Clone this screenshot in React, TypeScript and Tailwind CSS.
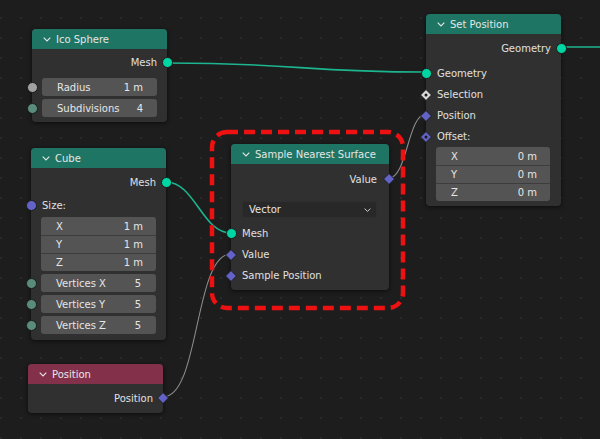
import React from "react";

type SocketKind = "geo" | "float" | "int" | "vec" | "vecField" | "vecFieldDot" | "boolField";

const Socket = ({ kind, side }: { kind: SocketKind; side: "left" | "right" }) => {
  const pos = side === "left" ? "left-[-6px]" : "right-[-6px]";
  const base = `absolute top-1/2 -translate-y-1/2 ${pos} w-[12px] h-[12px] flex items-center justify-center`;
  if (kind === "geo" || kind === "float" || kind === "int" || kind === "vec") {
    const color =
      kind === "geo" ? "bg-[#00d6a3]" : kind === "float" ? "bg-[#a1a1a1]" : kind === "int" ? "bg-[#598c7c]" : "bg-[#6363c7]";
    return (
      <span className={base}>
        <span className={`w-[11px] h-[11px] rounded-full border border-[#1a1a1a] ${color}`} />
      </span>
    );
  }
  const fill = kind === "boolField" ? "#d9d9d9" : "#6363c7";
  return (
    <span className={base}>
      <svg width="12" height="12" viewBox="0 0 12 12">
        <path d="M6 0.5 L11.5 6 L6 11.5 L0.5 6 Z" fill={fill} stroke="#1a1a1a" strokeWidth="1" />
        {(kind === "boolField" || kind === "vecFieldDot") && <circle cx="6" cy="6" r="1.5" fill="#1a1a1a" />}
      </svg>
    </span>
  );
};

const Chevron = () => (
  <svg width="8" height="5" viewBox="0 0 8 5" className="shrink-0">
    <path d="M0.7 0.7 L4 4 L7.3 0.7" fill="none" stroke="#e6e6e6" strokeWidth="1.1" />
  </svg>
);

const Node = ({
  x,
  y,
  w,
  title,
  header = "bg-[#1f7563]",
  children,
}: {
  x: number;
  y: number;
  w: number;
  title: string;
  header?: string;
  children: React.ReactNode;
}) => (
  <div
    className="absolute rounded-[4px] bg-[#303030] shadow-[0_1px_4px_rgba(0,0,0,0.6)]"
    style={{ left: x, top: y, width: w }}
  >
    <div className={`h-[20px] rounded-t-[4px] ${header} flex items-center gap-[5px] pl-[11px] text-[10px] text-[#e6e6e6]`}>
      <Chevron />
      <span>{title}</span>
    </div>
    {children}
  </div>
);

const OutRow = ({ label, kind, h = 22 }: { label: string; kind: SocketKind; h?: number }) => (
  <div className="relative flex items-center justify-end pr-[10px] text-[10px] text-[#e0e0e0]" style={{ height: h }}>
    {label}
    <Socket kind={kind} side="right" />
  </div>
);

const InRow = ({ label, kind, h = 21 }: { label: string; kind: SocketKind; h?: number }) => (
  <div className="relative flex items-center pl-[11px] text-[10px] text-[#e0e0e0]" style={{ height: h }}>
    {label}
    <Socket kind={kind} side="left" />
  </div>
);

const Field = ({ label, value, kind, pr = "pr-[14px]" }: { label: string; value: string; kind?: SocketKind; pr?: string }) => (
  <div className="relative">
    {kind && <Socket kind={kind} side="left" />}
    <div className={`mx-[10px] h-[18px] rounded-[3px] bg-[#545454] flex items-center justify-between pl-[15px] ${pr} text-[10px] text-[#e6e6e6]`}>
      <span>{label}</span>
      <span>{value}</span>
    </div>
  </div>
);

const VecFields = ({ rows, mr = "mr-[10px]" }: { rows: [string, string][]; mr?: string }) => (
  <div className={`ml-[10px] ${mr} rounded-[3px] bg-[#545454] flex flex-col`}>
    {rows.map(([l, v], i) => (
      <div
        key={l}
        className={`h-[18px] flex items-center justify-between pl-[15px] pr-[13px] text-[10px] text-[#e6e6e6] ${
          i > 0 ? "border-t border-[#3d3d3d]" : ""
        }`}
      >
        <span>{l}</span>
        <span>{v}</span>
      </div>
    ))}
  </div>
);

export default function App() {
  return (
    <div
      className="relative w-[600px] h-[439px] overflow-hidden bg-[#1d1d1d] bg-[radial-gradient(circle,#2a2a2a_1px,transparent_1.2px)] bg-[size:20px_20px] bg-[position:11px_8px]"
      style={{ fontFamily: '"DejaVu Sans", sans-serif' }}
    >
      <svg className="absolute inset-0" width="600" height="439">
        <path d="M167 63 C300 63 300 72 426 72" fill="none" stroke="#1cb58f" strokeWidth="1.6" />
        <path d="M561 47 L600 47" fill="none" stroke="#1cb58f" strokeWidth="1.6" />
        <path d="M166 182 C195 182 202 233 231 233" fill="none" stroke="#1cb58f" strokeWidth="1.6" />
        <path d="M163 397 C200 397 194 254 231 254" fill="none" stroke="#8c8c8c" strokeWidth="1.1" />
        <path d="M389 178 C407 178 408 114 426 114" fill="none" stroke="#8c8c8c" strokeWidth="1.1" />
      </svg>

      <Node x={32} y={29} w={135} title="Ico Sphere">
        <div className="pt-[3px]">
          <OutRow label="Mesh" kind="geo" h={21} />
        </div>
        <div className="mt-[5px] flex flex-col gap-[3px] pb-[5px]">
          <Field label="Radius" value="1 m" kind="float" />
          <Field label="Subdivisions" value="4" kind="int" />
        </div>
      </Node>

      <Node x={31} y={148} w={135} title="Cube">
        <div className="pt-[3px]">
          <OutRow label="Mesh" kind="geo" />
        </div>
        <div className="relative h-[24px] flex items-center pl-[11px] text-[10px] text-[#e0e0e0]">
          Size:
          <Socket kind="vec" side="left" />
        </div>
        <VecFields rows={[["X", "1 m"], ["Y", "1 m"], ["Z", "1 m"]]} />
        <div className="mt-[3px] flex flex-col gap-[3px] pb-[6px]">
          <Field label="Vertices X" value="5" kind="int" pr="pr-[15px]" />
          <Field label="Vertices Y" value="5" kind="int" pr="pr-[15px]" />
          <Field label="Vertices Z" value="5" kind="int" pr="pr-[15px]" />
        </div>
      </Node>

      <Node x={231} y={144} w={158} title="Sample Nearest Surface">
        <div className="pt-[4px]">
          <div className="relative h-[22px] flex items-center justify-end pr-[12px] text-[10px] text-[#e0e0e0]">
            Value
            <Socket kind="vecField" side="right" />
          </div>
        </div>
        <div className="mt-[11px] ml-[11px] mr-[12px] h-[17px] rounded-[3px] bg-[#282828] border border-[#2e2e2e] flex items-center justify-between pl-[6px] pr-[5px] text-[10px] text-[#e6e6e6]">
          <span>Vector</span>
          <svg width="7" height="4" viewBox="0 0 7 4">
            <path d="M0.6 0.6 L3.5 3.4 L6.4 0.6" fill="none" stroke="#d0d0d0" strokeWidth="1" />
          </svg>
        </div>
        <div className="mt-[5px] pb-[4px]">
          <InRow label="Mesh" kind="geo" />
          <InRow label="Value" kind="vecField" />
          <InRow label="Sample Position" kind="vecField" />
        </div>
      </Node>

      <Node x={426} y={14} w={135} title="Set Position">
        <div className="pt-[3px]">
          <OutRow label="Geometry" kind="geo" />
        </div>
        <div className="mt-[4px]">
          <InRow label="Geometry" kind="geo" />
          <InRow label="Selection" kind="boolField" />
          <InRow label="Position" kind="vecField" />
          <InRow label="Offset:" kind="vecFieldDot" />
        </div>
        <div className="pb-[5px]">
          <VecFields rows={[["X", "0 m"], ["Y", "0 m"], ["Z", "0 m"]]} mr="mr-[11px]" />
        </div>
      </Node>

      <Node x={28} y={364} w={135} title="Position" header="bg-[#83314a]">
        <div className="pt-[3px] pb-[4px]">
          <OutRow label="Position" kind="vecField" />
        </div>
      </Node>

      <svg className="absolute inset-0 pointer-events-none" width="600" height="439">
        <rect
          x="212"
          y="132"
          width="191"
          height="176"
          rx="15"
          fill="none"
          stroke="#ee1111"
          strokeWidth="4.5"
          strokeDasharray="11 6"
        />
      </svg>
    </div>
  );
}
